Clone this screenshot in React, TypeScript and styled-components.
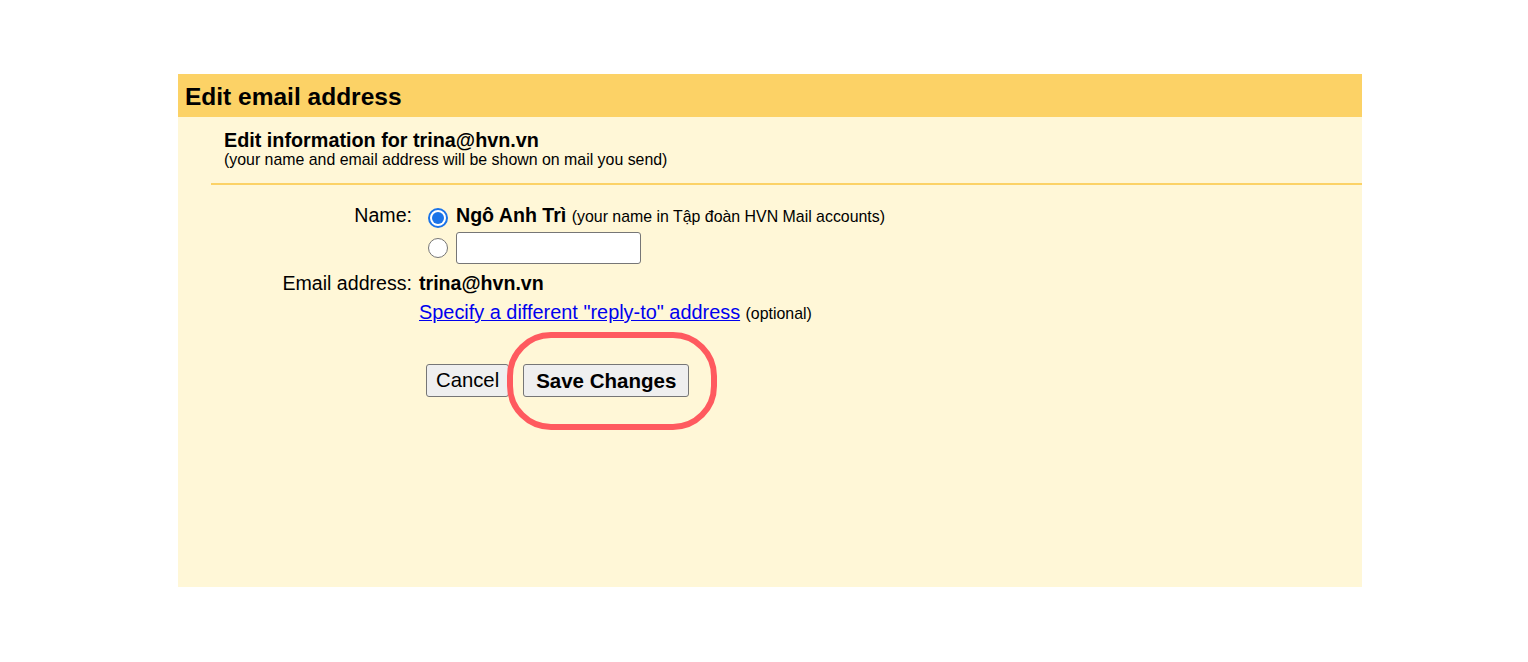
import React from "react"
import styled, { createGlobalStyle } from "styled-components"

const GlobalStyle = createGlobalStyle`
  html, body {
    margin: 0;
    padding: 0;
    background: #ffffff;
    font-family: "Liberation Sans", Arial, sans-serif;
    color: #000000;
  }
`

const Page = styled.div`
  padding: 74px 0 0 178px;
`

const Panel = styled.section`
  width: 1184px;
  height: 513px;
  background: #fff7d7;
  display: flex;
  flex-direction: column;
`

const Header = styled.header`
  height: 43px;
  background: #fcd266;
  display: flex;
  align-items: center;
  padding-left: 7px;
`

const Title = styled.h1`
  margin: 0;
  font-size: 24.5px;
  font-weight: bold;
  line-height: 28px;
  position: relative;
  top: 1px;
`

const Body = styled.div`
  padding-left: 33px;
`

const Intro = styled.div`
  padding: 12px 0 14px 13px;
  border-bottom: 2px solid #fcd266;
`

const IntroTitle = styled.h2`
  margin: 0;
  font-size: 19.8px;
  font-weight: bold;
  line-height: 22px;
`

const IntroNote = styled.p`
  margin: 0;
  font-size: 15.9px;
  line-height: 18px;
`

const Form = styled.div`
  display: grid;
  grid-template-columns: 201px auto;
  column-gap: 7px;
  padding-top: 18px;
  font-size: 19.6px;
`

const Label = styled.div<{ $top?: number }>`
  text-align: right;
  line-height: 24px;
  margin-top: ${(p) => p.$top ?? 0}px;
`

const Options = styled.div`
  display: flex;
  flex-direction: column;
  gap: 3px;
`

const Option = styled.label`
  display: flex;
  align-items: center;
  gap: 8px;
  line-height: 24px;
`

const Radio = styled.span<{ $checked?: boolean }>`
  box-sizing: border-box;
  width: 20px;
  height: 20px;
  margin-left: 9px;
  border-radius: 50%;
  border: ${(p) => (p.$checked ? "2px solid #1a73e8" : "1px solid #767676")};
  background: #ffffff;
  position: relative;
  top: ${(p) => (p.$checked ? "2px" : "0")};
  flex-shrink: 0;

  &::after {
    content: "";
    display: ${(p) => (p.$checked ? "block" : "none")};
    position: absolute;
    inset: 2px;
    border-radius: 50%;
    background: #1a73e8;
  }
`

const Strong = styled.span`
  font-weight: bold;
`

const Small = styled.span`
  font-size: 15.9px;
  font-weight: normal;
`

const TextInput = styled.input`
  box-sizing: border-box;
  width: 185px;
  height: 32px;
  border: 1px solid #767676;
  border-radius: 3px;
  background: #ffffff;
  margin: 0;
`

const Value = styled.div<{ $top?: number }>`
  line-height: 24px;
  margin-top: ${(p) => p.$top ?? 0}px;
`

const Link = styled.a`
  color: #0000ee;
  text-decoration: underline;
  font-size: 19.9px;
`

const Actions = styled.div`
  position: relative;
  display: flex;
  gap: 14px;
  margin: 38px 0 0 7px;
`

const Button = styled.button<{ $primary?: boolean }>`
  height: 33px;
  padding: 0 ${(p) => (p.$primary ? 12 : 9)}px;
  background: #efefef;
  border: 1px solid #767676;
  border-radius: 3px;
  font-family: "Liberation Sans", Arial, sans-serif;
  font-size: ${(p) => (p.$primary ? 20.5 : 20.3)}px;
  font-weight: ${(p) => (p.$primary ? "bold" : "normal")};
  color: #000000;
  position: relative;
  z-index: 1;
`

const Highlight = styled.div`
  position: absolute;
  left: 81px;
  top: -32px;
  width: 210px;
  height: 98px;
  box-sizing: border-box;
  border: 6px solid #ff5a5f;
  border-radius: 44px;
  pointer-events: none;
  z-index: 2;
`

export default function App() {
  return (
    <>
      <GlobalStyle />
      <Page>
        <Panel>
          <Header>
            <Title>Edit email address</Title>
          </Header>
          <Body>
            <Intro>
              <IntroTitle>Edit information for trina@hvn.vn</IntroTitle>
              <IntroNote>(your name and email address will be shown on mail you send)</IntroNote>
            </Intro>
            <Form>
              <Label>Name:</Label>
              <Options>
                <Option>
                  <Radio $checked />
                  <span>
                    <Strong>Ngô Anh Trì</Strong> <Small>(your name in Tập đoàn HVN Mail accounts)</Small>
                  </span>
                </Option>
                <Option>
                  <Radio />
                  <TextInput type="text" />
                </Option>
              </Options>
              <Label $top={7}>Email address:</Label>
              <Value $top={7}>
                <Strong>trina@hvn.vn</Strong>
              </Value>
              <div />
              <Value $top={5}>
                <Link href="#">Specify a different "reply-to" address</Link> <Small>(optional)</Small>
              </Value>
              <div />
              <Actions>
                <Button>Cancel</Button>
                <Button $primary>Save Changes</Button>
                <Highlight />
              </Actions>
            </Form>
          </Body>
        </Panel>
      </Page>
    </>
  )
}
